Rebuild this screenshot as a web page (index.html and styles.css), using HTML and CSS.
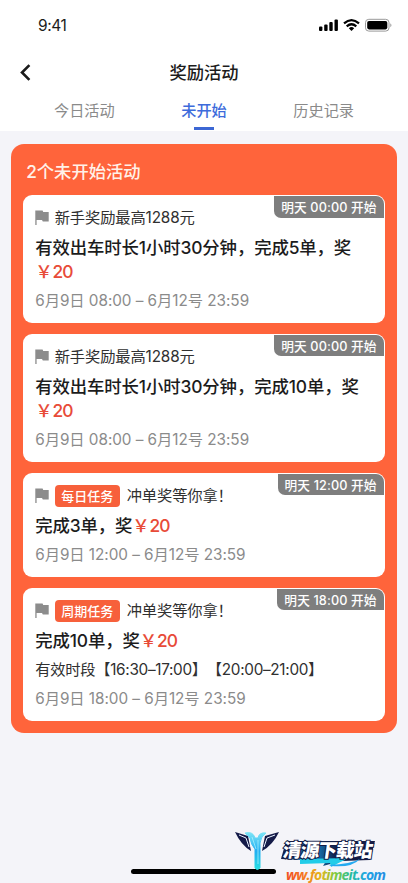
FILE: index.html
```html
<!DOCTYPE html>
<html lang="zh-CN">
<head>
<meta charset="utf-8">
<meta name="viewport" content="width=device-width, initial-scale=1">
<title>奖励活动</title>
<link rel="stylesheet" href="styles.css">
</head>
<body>
<svg width="0" height="0" class="defs" aria-hidden="true">
  <symbol id="flag" viewBox="0 0 14 15"><path d="M.3 .4H7.600l.6 1.600h5.500v9.600H7.800l-.8-1.600H1.600v5H.3z" fill="#8c8c8c"/></symbol>
</svg>
<header class="top">
  <div class="status">
    <span class="time">9:41</span>
    <svg class="signals" width="74" height="14" viewBox="0 0 74 14">
      <g fill="#000">
        <rect x="0" y="8.500" width="3.400" height="4.500" rx="1"/>
        <rect x="5.200" y="6.500" width="3.400" height="6.500" rx="1"/>
        <rect x="10.300" y="4" width="3.400" height="9" rx="1"/>
        <rect x="15.500" y="1.500" width="3.400" height="11.500" rx="1"/>
      </g>
      <g fill="none" stroke="#000" stroke-width="2.200">
        <path d="M25 5.300Q32.500 -1.200 40 5.300"/>
        <path d="M27.700 8.300Q32.500 4.200 37.300 8.300"/>
      </g>
      <path d="M29.800 10.200Q32.500 8 35.200 10.200L32.500 13z"/>
      <rect x="46.500" y="1.300" width="23.500" height="11.800" rx="3.300" fill="none" stroke="#999"/>
      <rect x="48.200" y="3" width="20.100" height="8.400" rx="1.800"/>
      <path d="M71.300 5.300q2.300 1.900 0 3.900z" fill="#999"/>
    </svg>
  </div>
  <div class="nav">
    <svg class="back" width="12" height="18" viewBox="0 0 12 18"><path d="M10.400 1.100L3 8.500l7.400 7.400" fill="none" stroke="#1b1b1b" stroke-width="2.600"/></svg>
    <h1>奖励活动</h1>
  </div>
  <nav class="tabs">
    <span>今日活动</span>
    <span class="active">未开始</span>
    <span>历史记录</span>
  </nav>
</header>
<main class="panel">
  <h2>2个未开始活动</h2>
  <article class="card">
    <div class="badge">明天 00:00 开始</div>
    <div class="label"><svg class="flag"><use href="#flag"/></svg><span class="name">新手奖励最高1288元</span></div>
    <div class="goal">有效出车时长1小时30分钟，完成5单，奖<br><b>￥<i>20</i></b></div>
    <div class="date">6月9日 08:00 – 6月12号 23:59</div>
  </article>
  <article class="card">
    <div class="badge">明天 00:00 开始</div>
    <div class="label"><svg class="flag"><use href="#flag"/></svg><span class="name">新手奖励最高1288元</span></div>
    <div class="goal">有效出车时长1小时30分钟，完成10单，奖<br><b>￥<i>20</i></b></div>
    <div class="date">6月9日 08:00 – 6月12号 23:59</div>
  </article>
  <article class="card">
    <div class="badge">明天 12:00 开始</div>
    <div class="label"><svg class="flag"><use href="#flag"/></svg><span class="tag">每日任务</span><span class="name">冲单奖等你拿！</span></div>
    <div class="goal">完成3单，奖<b>￥<i>20</i></b></div>
    <div class="date">6月9日 12:00 – 6月12号 23:59</div>
  </article>
  <article class="card">
    <div class="badge">明天 18:00 开始</div>
    <div class="label"><svg class="flag"><use href="#flag"/></svg><span class="tag">周期任务</span><span class="name">冲单奖等你拿！</span></div>
    <div class="goal">完成10单，奖<b>￥<i>20</i></b></div>
    <div class="slots">有效时段【16:30–17:00】【20:00–21:00】</div>
    <div class="date">6月9日 18:00 – 6月12号 23:59</div>
  </article>
</main>
<div class="home"></div>
<svg class="brand" width="183" height="63" viewBox="0 0 183 63">
  <defs>
    <linearGradient id="wing" x1="0" y1="0" x2="0" y2="1"><stop offset="0" stop-color="#7ce4f6"/><stop offset=".5" stop-color="#22aef2"/><stop offset="1" stop-color="#29dfe2"/></linearGradient>
    <linearGradient id="rainbow" gradientUnits="userSpaceOnUse" x1="61" y1="0" x2="161" y2="0"><stop offset="0" stop-color="#f14b24"/><stop offset=".18" stop-color="#f47622"/><stop offset=".34" stop-color="#e6b51c"/><stop offset=".5" stop-color="#7dc93e"/><stop offset=".65" stop-color="#28bd9a"/><stop offset=".8" stop-color="#1fa5e4"/><stop offset="1" stop-color="#258be2"/></linearGradient>
    <linearGradient id="navy" x1="0" y1="0" x2="1" y2="0"><stop offset="0" stop-color="#141c46"/><stop offset=".35" stop-color="#1683c4"/><stop offset=".6" stop-color="#101840"/><stop offset="1" stop-color="#141c46"/></linearGradient>
  </defs>
  <path d="M10 12l13 4 3 15q-10-6-16-19zM54 12l-14 4-3 15q11-6 17-19z" fill="#141a48"/>
  <path d="M14 15l7 3 3 9M50 15l-8 3-3 9" fill="none" stroke="#e8f2ff" stroke-width="1"/>
  <path d="M20 13q8-2 10 5h3q1-6 8-5-5 3-6 10v25q-3 3-5 0V29q-4-4-5-11z" fill="url(#wing)" stroke="url(#wing)" stroke-width="1"/>
  <path d="M27 17l4 12M33 20v24" stroke="#b6f5fc" stroke-width=".7"/>
  <path d="M61 21h89l-5 19-29 1-18 5 3-5-45-2z" fill="url(#navy)"/>
  <path d="M75 39l49-1q-9 4-18 9l-1-4-30 1z" fill="#22cce8"/>
  <path d="M104 45q22-1 31-6-8 9-29 7z" fill="#25aaf1"/>
  <text class="site" transform="translate(57 37) skewX(-8)" textLength="90">清源下载站</text>
  <text class="url" x="61" y="60" textLength="100">ww.fotimeit.com</text>
</svg>
</body>
</html>
```
FILE: styles.css
```css
* { box-sizing: border-box; }
body {
  margin: 0;
  height: 883px;
  overflow: hidden;
  position: relative;
  background: #f4f4f9;
  color: #1c1c1c;
  font-family: Inter, "Noto Sans CJK SC", sans-serif;
  text-spacing-trim: space-all;
}
.defs { position: absolute; }
.top { height: 131px; background: #fff; }
.status {
  height: 50px;
  padding: 0 15px 0 38px;
  display: flex;
  align-items: center;
  justify-content: space-between;
}
.time { font-size: 15.500px; letter-spacing: -.4px; }
.nav {
  height: 45px;
  padding-left: 19px;
  display: grid;
  grid-template-columns: 12px 1fr 31px;
  align-items: center;
}
h1 { margin: 0; text-align: center; font-size: 17.300px; font-weight: 500; line-height: 24px; }
.tabs {
  height: 36px;
  padding: 0 24.500px;
  display: grid;
  grid-template-columns: repeat(3, 1fr);
  text-align: center;
  font-size: 15.200px;
  line-height: 32px;
  color: #8a8a8a;
}
.active { color: #3d6bdb; font-weight: 500; }
.active::after {
  content: "";
  display: block;
  width: 20px;
  height: 3px;
  margin: 0 auto;
  background: #3c67d4;
}
.panel {
  width: 385.500px;
  margin: 13px 0 0 11.200px;
  padding: 0 12px 12.500px;
  border-radius: 13px;
  background: #ff643b;
  display: flex;
  flex-direction: column;
  gap: 11px;
}
h2 {
  margin: 0 0 -11px;
  padding: 3px 0 0 3px;
  height: 51px;
  line-height: 50px;
  color: #fff1e8;
  font-size: 17.300px;
  font-weight: 500;
}
.card {
  position: relative;
  background: #fff;
  border-radius: 9px;
  padding: 10.700px 12px 9.700px;
  white-space: nowrap;
}
.badge {
  position: absolute;
  top: 1px;
  right: 1px;
  height: 21.500px;
  padding: 1px 7px 0;
  border-radius: 0 8px 0 7px;
  background: #7e7e7e;
  color: #fff;
  font-size: 12.700px;
  font-weight: 500;
  letter-spacing: .12px;
  line-height: 22px;
}
.label {
  height: 25px;
  display: flex;
  align-items: center;
  font-size: 15.300px;
  color: #303030;
}
.name { line-height: 22px; letter-spacing: -.15px; }
.flag { width: 14px; height: 15px; margin: -1px 5.500px 0 0; }
.tag {
  height: 22px;
  width: 65px;
  margin-right: 7px;
  border-radius: 4px;
  background: #f7603b;
  color: #fff;
  text-align: center;
  font-size: 13px;
  font-weight: 500;
  line-height: 22px;
}
.goal { margin-top: 5.100px; font-size: 17.400px; letter-spacing: -.12px; line-height: 24px; font-weight: 500; }
.goal b { color: #e84b38; font-weight: 500; }
.goal i { font-style: normal; letter-spacing: -1px; }
.slots { height: 24px; margin-top: 5px; line-height: 24px; font-size: 15.300px; letter-spacing: -.3px; color: #303030; }
.date { margin-top: 5px; height: 24.500px; line-height: 24.500px; font-size: 15.300px; letter-spacing: -.04px; color: #8b8b8b; }
.home {
  position: absolute;
  left: 131px;
  top: 869px;
  width: 145px;
  height: 5px;
  border-radius: 3px;
  background: #000;
}
.brand { position: absolute; left: 225px; top: 820px; }
.site {
  font: 900 19px "Noto Sans CJK SC", sans-serif;
  fill: #fff;
  stroke: #131b45;
  stroke-width: 2px;
  paint-order: stroke;
}
.url { font: italic 700 14px "Open Sans", sans-serif; fill: url(#rainbow); }
```
